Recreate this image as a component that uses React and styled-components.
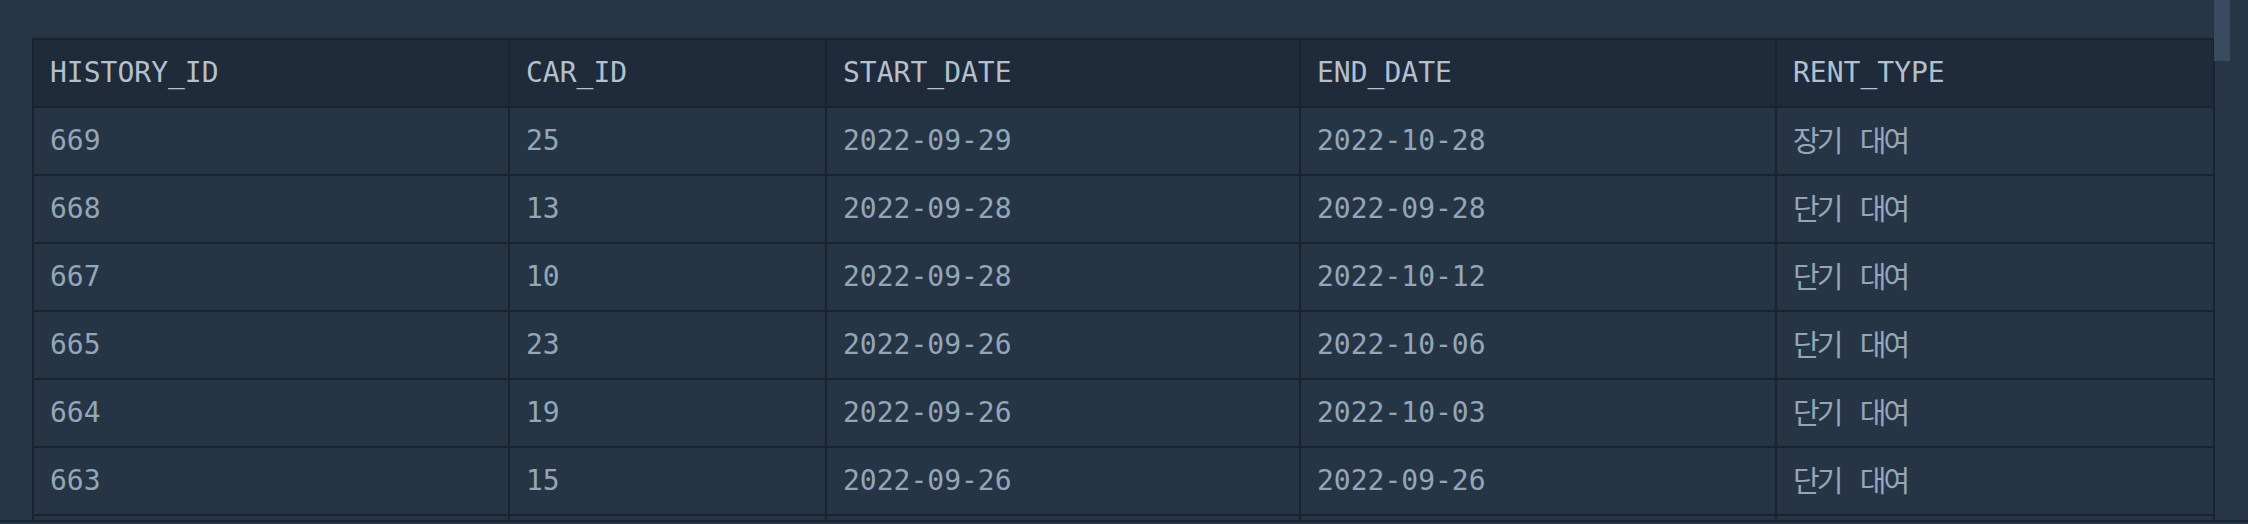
import React from 'react'
import styled, { createGlobalStyle } from 'styled-components'

const GlobalStyle = createGlobalStyle`
    html, body {
        margin: 0;
        padding: 0;
        background: #273646;
        overflow: hidden;
    }
`

const Frame = styled.div`
    position: relative;
    box-sizing: border-box;
    height: 522px;
    padding: 38px 34px 0 32px;
    overflow: hidden;
    border-bottom: 2px solid #1a2330;
`

const Thumb = styled.div`
    position: absolute;
    top: 0;
    right: 18px;
    width: 16px;
    height: 61px;
    background: #3a4a5f;
`

const Table = styled.table`
    width: 100%;
    border-collapse: collapse;
    table-layout: fixed;
    border: 2px solid #1a2330;
    font-family: "DejaVu Sans Mono", "Noto Sans CJK KR", monospace;
    font-size: 28px;
    line-height: 34px;
`

const HeadCell = styled.th`
    background: #1f2a3b;
    color: #b3c1cf;
    font-weight: normal;
    text-align: left;
    height: 34px;
    padding: 16px 16px;
    border: 2px solid #1a2330;
    white-space: nowrap;
`

const Cell = styled.td`
    background: #263546;
    color: #94a6b8;
    height: 34px;
    padding: 16px 16px;
    border: 2px solid #1a2330;
    white-space: nowrap;
    overflow: hidden;
`

const Hangul = styled.span`
    display: inline-block;
    vertical-align: top;
    height: 34px;
    line-height: 30px;
    font-family: "Noto Sans CJK KR", sans-serif;
    font-size: 29px;
    letter-spacing: -3px;
    word-spacing: 16px;
`

const columns = [
    { key: 'HISTORY_ID', width: 476 },
    { key: 'CAR_ID', width: 317 },
    { key: 'START_DATE', width: 474 },
    { key: 'END_DATE', width: 476 },
    { key: 'RENT_TYPE', width: 438 },
]

const rows = [
    ['669', '25', '2022-09-29', '2022-10-28', '장기 대여'],
    ['668', '13', '2022-09-28', '2022-09-28', '단기 대여'],
    ['667', '10', '2022-09-28', '2022-10-12', '단기 대여'],
    ['665', '23', '2022-09-26', '2022-10-06', '단기 대여'],
    ['664', '19', '2022-09-26', '2022-10-03', '단기 대여'],
    ['663', '15', '2022-09-26', '2022-09-26', '단기 대여'],
    ['662', '8', '2022-09-25', '2022-10-01', '단기 대여'],
]

const App = () => {
    return (
        <>
            <GlobalStyle />
            <Frame>
                <Table>
                    <colgroup>
                        {columns.map(c => <col key={c.key} style={{ width: c.width }} />)}
                    </colgroup>
                    <thead>
                        <tr>
                            {columns.map(c => <HeadCell key={c.key}>{c.key}</HeadCell>)}
                        </tr>
                    </thead>
                    <tbody>
                        {rows.map(r => (
                            <tr key={r[0]}>
                                <Cell>{r[0]}</Cell>
                                <Cell>{r[1]}</Cell>
                                <Cell>{r[2]}</Cell>
                                <Cell>{r[3]}</Cell>
                                <Cell><Hangul>{r[4]}</Hangul></Cell>
                            </tr>
                        ))}
                    </tbody>
                </Table>
                <Thumb />
            </Frame>
        </>
    )
}

export default App
